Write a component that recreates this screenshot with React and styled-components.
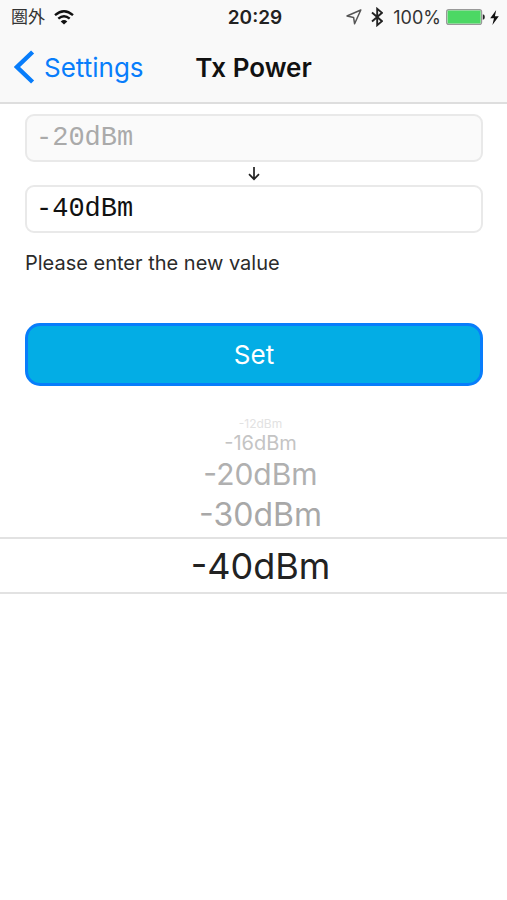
import { useState } from "react";
import styled, { createGlobalStyle } from "styled-components";

const GlobalStyle = createGlobalStyle`
    *{
        box-sizing:border-box;
    }
    body{
        margin:0;
        background-color:#fff;
        color:#2b2b2b;
        font-family:Inter, "Noto Sans CJK JP", sans-serif;
    }
`;
const Header = styled.header`
    background-color:#f9f9f9;
    border-bottom:2px solid #dedede;
`;
const StatusBar = styled.div`
    display:grid;
    grid-template-columns:1fr auto 1fr;
    align-items:center;
    height:34px;
    padding:0 8px 0 11px;
    font-size:18px;
    color:#333;
`;
const StatusGroup = styled.div`
    display:flex;
    align-items:center;
    justify-content:${props => props.$end ? "flex-end" : "flex-start"};
    gap:${props => props.$end ? "5px" : "9px"};
    svg{
        display:block;
    }
`;
const Carrier = styled.span`
    font-size:17px;
    line-height:20px;
`;
const Clock = styled.time`
    font-size:19px;
    font-weight:600;
    color:#222;
`;
const BluetoothSlot = styled.span`
    padding:0 5px 0 4px;
`;
const NavBar = styled.nav`
    display:grid;
    grid-template-columns:1fr auto 1fr;
    align-items:center;
    height:68px;
    padding:0 14px 2px;
`;
const BackLink = styled.a`
    display:flex;
    align-items:center;
    gap:9px;
    color:#087dfb;
    font-size:26px;
    text-decoration:none;
`;
const Title = styled.h1`
    margin:0;
    font-size:26px;
    font-weight:600;
    color:#111;
`;
const Form = styled.form`
    display:flex;
    flex-direction:column;
    padding:10px 24px 0 25px;
`;
const ValueInput = styled.input`
    width:100%;
    height:48px;
    padding:0 9px;
    border:2px solid #e9e9e9;
    border-radius:9px;
    background-color:#fff;
    color:#111;
    font-family:"Liberation Mono", monospace;
    font-size:27px;
    outline:none;
    &:disabled{
        background-color:#fafafa;
        color:#aaa;
    }
`;
const ArrowRow = styled.div`
    display:flex;
    align-items:center;
    justify-content:center;
    height:23px;
`;
const Hint = styled.label`
    margin-top:16px;
    font-size:20px;
    line-height:28px;
`;
const SetButton = styled.button`
    height:63px;
    margin-top:46px;
    border:3px solid #087dfb;
    border-radius:15px;
    background-color:#03ade5;
    color:#fff;
    font-family:inherit;
    font-size:26px;
    cursor:pointer;
`;
const Wheel = styled.fieldset`
    display:flex;
    flex-direction:column;
    min-width:0;
    margin:32px 0 0;
    padding:0;
    border:0;
`;
const WheelRow = styled.label`
    display:flex;
    align-items:center;
    justify-content:center;
    height:${props => props.$height}px;
    padding-left:14px;
    color:${props => props.$color};
    font-size:${props => props.$size}px;
    line-height:1;
    border:solid #e2e2e2;
    border-width:${props => props.$selected ? "2px 0" : "0"};
    cursor:pointer;
`;
const WheelRadio = styled.input`
    appearance:none;
    width:0;
    height:0;
    margin:0;
    outline:none;
`;

const CURRENT = "-20dBm";

// the rows shrink and fade as they roll away from the selected one
const rows = [
    {value:"-12dBm", height:12, size:12, color:"#e2e2e2"},
    {value:"-16dBm", height:26, size:20, color:"#c4c4c4"},
    {value:"-20dBm", height:36, size:30, color:"#b0b0b0"},
    {value:"-30dBm", height:45, size:32, color:"#a8a8a8"},
    {value:"-40dBm", height:57, size:36, color:"#222", selected:true},
];

function WifiIcon() {
    return (
        <svg width="20" height="15" viewBox="0 0 20 15" fill="none" stroke="#111" strokeWidth="2.4" aria-hidden="true">
            <path d="M1 5.2Q10-2.6 19 5.2"/>
            <path d="M4.3 8.7Q10 3.8 15.7 8.7"/>
            <path d="M10 14.6L6.7 11.4Q10 8.8 13.3 11.4Z" fill="#111" stroke="none"/>
        </svg>
    );
}

function LocationIcon() {
    return (
        <svg width="16" height="16" viewBox="0 0 16 16" fill="none" stroke="#555" strokeWidth="1.5" strokeLinejoin="round" aria-hidden="true">
            <path d="M14.8 1L1 7L7.6 8.4L8.6 14.8Z"/>
        </svg>
    );
}

function BluetoothIcon() {
    return (
        <svg width="12" height="20" viewBox="0 0 12 20" fill="none" stroke="#222" strokeWidth="1.9" aria-hidden="true">
            <path d="M1 5.5L11 14.2L6.2 18.2V1.8L11 5.8L1 14.5"/>
        </svg>
    );
}

function BatteryIcon() {
    return (
        <svg width="39" height="16" viewBox="0 0 39 16" aria-hidden="true">
            <rect x="0.6" y="0.6" width="35" height="14.8" rx="2.2" fill="#e6efe7" stroke="#999" strokeWidth="1.2"/>
            <rect x="1.6" y="1.6" width="33" height="12.8" rx="1" fill="#4cd864"/>
            <path d="M36.8 5.2Q38.8 5.5 38.8 8T36.8 10.8Z" fill="#222"/>
        </svg>
    );
}

function BoltIcon() {
    return (
        <svg width="9" height="15" viewBox="0 0 9 15" aria-hidden="true">
            <path d="M6.2 0L0.2 8.3H4L2.4 15L8.8 6.2H4.9Z" fill="#111"/>
        </svg>
    );
}

function ChevronIcon() {
    return (
        <svg width="21" height="34" viewBox="0 0 21 34" fill="none" stroke="currentColor" strokeWidth="4.4" aria-hidden="true">
            <path d="M18.6 2L3 17L18.6 32"/>
        </svg>
    );
}

function DownArrow() {
    return (
        <svg width="12" height="15" viewBox="0 0 12 15" fill="none" stroke="#222" strokeWidth="1.7" aria-hidden="true">
            <path d="M6 1V13M1 8.2L6 13.2L11 8.2"/>
        </svg>
    );
}

export default function App() {

    const [value,setValue] = useState("-40dBm");

    return (
        <>
            <GlobalStyle />
            <Header>
                <StatusBar>
                    <StatusGroup>
                        <Carrier lang="ja">圏外</Carrier>
                        <WifiIcon />
                    </StatusGroup>
                    <Clock>20:29</Clock>
                    <StatusGroup $end>
                        <LocationIcon />
                        <BluetoothSlot><BluetoothIcon /></BluetoothSlot>
                        <span>100%</span>
                        <BatteryIcon />
                        <BoltIcon />
                    </StatusGroup>
                </StatusBar>
                <NavBar>
                    <BackLink href="#settings">
                        <ChevronIcon />
                        Settings
                    </BackLink>
                    <Title>Tx Power</Title>
                </NavBar>
            </Header>
            <main>
                <Form onSubmit={ev => ev.preventDefault()}>
                    <ValueInput aria-label="Current value" value={CURRENT} disabled />
                    <ArrowRow><DownArrow /></ArrowRow>
                    <ValueInput id="new-value" value={value} onChange={ev => setValue(ev.target.value)} />
                    <Hint htmlFor="new-value">Please enter the new value</Hint>
                    <SetButton type="submit">Set</SetButton>
                </Form>
                <Wheel aria-label="Tx Power">
                    {rows.map(row => (
                        <WheelRow
                            key={row.value}
                            $height={row.height}
                            $size={row.size}
                            $color={row.color}
                            $selected={row.selected}>
                            <WheelRadio
                                type="radio"
                                name="tx-power"
                                value={row.value}
                                checked={value === row.value}
                                onChange={() => setValue(row.value)} />
                            {row.value}
                        </WheelRow>
                    ))}
                </Wheel>
            </main>
        </>
    );
}
